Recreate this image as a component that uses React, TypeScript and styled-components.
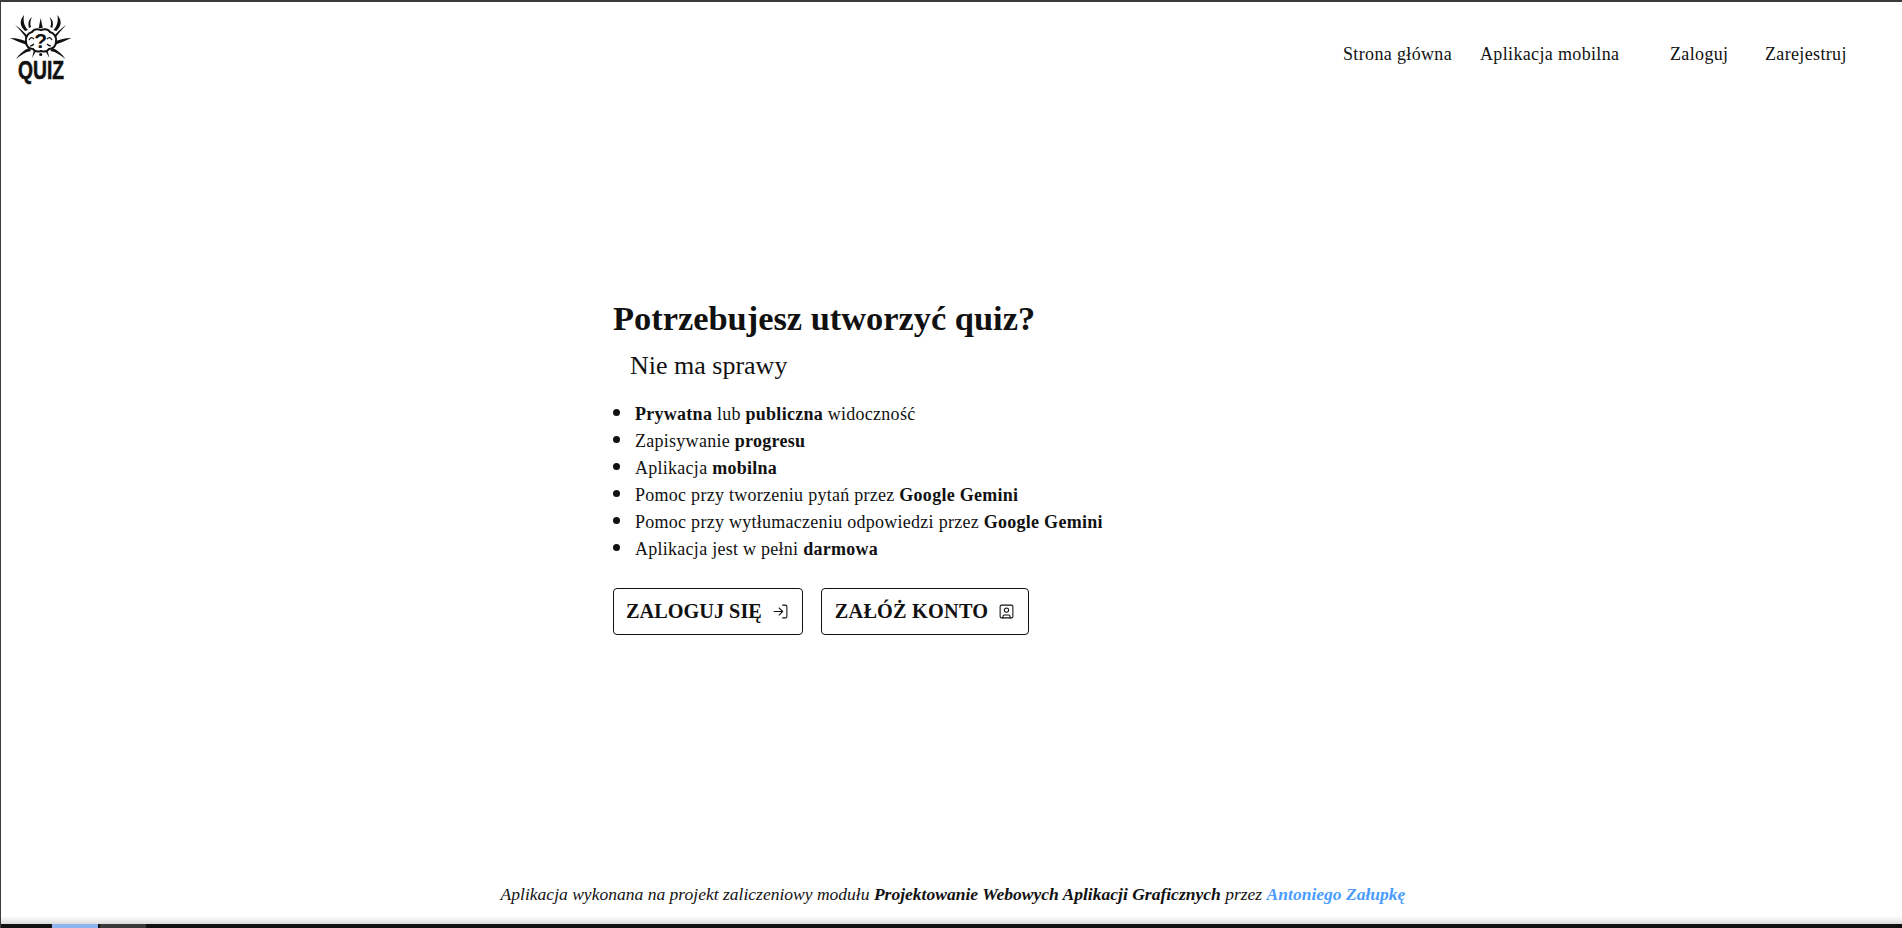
import React from 'react';
import styled, { createGlobalStyle } from 'styled-components';
import { LogIn, SquareUser } from 'lucide-react';

const GlobalStyle = createGlobalStyle`
  html, body {
    margin: 0;
    padding: 0;
    height: 100%;
    background: #fff;
  }
  body {
    font-family: "Liberation Serif", "DejaVu Serif", serif;
    color: #111;
    overflow: hidden;
  }
`;

// one half of the thorns, the other side is the same group mirrored
function Thorns() {
  return (
    <g fill="#111">
      <path d="M14 0c-5 6-4 11 1 16l3-1c-4-4-5-9-4-15z" />
      <path d="M22 2c-4 3-4 7-3 11l2-1c-1-3-1-6 1-10z" />
      <path d="M5 10c5 3 10 8 14 13l-2 2C14 19 10 15 5 10z" />
      <path d="M0 23c7 0 13 2 18 4l-1 3C12 28 6 26 0 23z" />
      <path d="M6 44c3-5 8-9 13-11l2 3c-6 1-10 4-15 8z" />
      <path d="M24 35l2 1-4 7z" />
    </g>
  );
}

function LogoMark() {
  return (
    <LogoSvg viewBox="0 0 62 46" aria-hidden="true">
      <Thorns />
      <g transform="matrix(-1 0 0 1 61.4 0)">
        <Thorns />
      </g>
      <path d="M30.7 3l-2 10h4z" fill="#111" />
      <path
        d="M16 27c-1-5 2-9 6-10 2-3 6-3 9-2 3-1 7-1 9 2 4 1 7 5 6 10 0 4-3 7-7 7-2 3-5 3-8 2-3 1-6 1-8-2-4 0-7-3-7-7z"
        fill="#fff"
        stroke="#111"
        strokeWidth="2"
      />
      <path d="M19 25c2-3 3-3 5-1M42 25c-2-3-3-3-5-1M20 31c2 0 3-1 4-2M41 31c-2 0-3-1-4-2" stroke="#111" strokeWidth="1.2" fill="none" />
      <LogoQuestion x="30.7" y="33" textAnchor="middle">?</LogoQuestion>
      <circle cx="30.7" cy="39.5" r="1.6" fill="#111" />
    </LogoSvg>
  );
}

export default function App() {
  return (
    <>
      <GlobalStyle />
      <Screen>
        <Header>
          <Logo>
            <LogoMark />
            <LogoWord>QUIZ</LogoWord>
          </Logo>
          <Nav>
            <NavLink $width={110}>Strona główna</NavLink>
            <NavLink $width={141}>Aplikacja mobilna</NavLink>
            <NavLink $width={57} $gap={49}>Zaloguj</NavLink>
            <NavLink $width={82} $gap={38}>Zarejestruj</NavLink>
          </Nav>
        </Header>

        <Main>
          <Title>Potrzebujesz utworzyć quiz?</Title>
          <Subtitle>Nie ma sprawy</Subtitle>
          <Features>
            <li><b>Prywatna</b> lub <b>publiczna</b> widoczność</li>
            <li>Zapisywanie <b>progresu</b></li>
            <li>Aplikacja <b>mobilna</b></li>
            <li>Pomoc przy tworzeniu pytań przez <b>Google Gemini</b></li>
            <li>Pomoc przy wytłumaczeniu odpowiedzi przez <b>Google Gemini</b></li>
            <li>Aplikacja jest w pełni <b>darmowa</b></li>
          </Features>
          <Actions>
            <ActionButton>
              ZALOGUJ SIĘ
              <LogIn size={17} strokeWidth={1.5} />
            </ActionButton>
            <ActionButton $wide>
              ZAŁÓŻ KONTO
              <SquareUser size={17} strokeWidth={1.5} />
            </ActionButton>
          </Actions>
        </Main>

        <Footer>
          Aplikacja wykonana na projekt zaliczeniowy modułu{' '}
          <b>Projektowanie Webowych Aplikacji Graficznych</b> przez{' '}
          <AuthorLink>Antoniego Załupkę</AuthorLink>
        </Footer>

        <Shadow />
        <Taskbar>
          <TaskTab $active />
          <TaskTab />
        </Taskbar>
      </Screen>
    </>
  );
}

const Screen = styled.div`
  box-sizing: border-box;
  height: 100vh;
  display: flex;
  flex-direction: column;
  border-top: 2px solid #3c3c3c;
  border-left: 1px solid #3c3c3c;
`;

const Header = styled.header`
  height: 70px;
  display: flex;
  justify-content: space-between;
  align-items: flex-start;
  padding: 13px 55px 0 9px;
`;

const Logo = styled.div`
  width: 62px;
  display: flex;
  flex-direction: column;
  align-items: center;
`;

const LogoSvg = styled.svg`
  width: 62px;
  height: 46px;
  display: block;
`;

const LogoQuestion = styled.text`
  font-family: "Liberation Sans", sans-serif;
  font-weight: 700;
  font-size: 21px;
  fill: #111;
`;

const LogoWord = styled.div`
  margin-top: -2px;
  font-family: "Liberation Sans", sans-serif;
  font-weight: 700;
  font-size: 26px;
  line-height: 22px;
  color: #111;
  -webkit-text-stroke: 0.6px #111;
  transform: scaleX(0.74);
`;

const Nav = styled.nav`
  display: flex;
  margin-top: 29px;
`;

const NavLink = styled.a<{ $width: number; $gap?: number }>`
  width: ${(p) => p.$width}px;
  margin-left: ${(p) => p.$gap ?? 27}px;
  font-size: 18px;
  letter-spacing: 0.35px;
  line-height: 20px;
  color: #111;
  white-space: nowrap;
`;

const Main = styled.main`
  flex: 1;
  display: flex;
  flex-direction: column;
  align-items: flex-start;
  padding: 211px 0 0 612px;
`;

const Title = styled.h1`
  margin: 0;
  font-size: 34.4px;
  line-height: 44px;
  font-weight: 700;
`;

const Subtitle = styled.h2`
  margin: 8px 0 0 17px;
  font-size: 26px;
  line-height: 36px;
  font-weight: 400;
`;

const Features = styled.ul`
  margin: 17px 0 0;
  padding: 0 0 0 22px;
  list-style: none;
  font-size: 18px;
  letter-spacing: 0.27px;

  li {
    position: relative;
    height: 27px;
    line-height: 27px;
  }

  li::before {
    content: "";
    position: absolute;
    left: -22px;
    top: 8px;
    width: 7px;
    height: 7px;
    border-radius: 50%;
    background: #111;
  }
`;

const Actions = styled.div`
  display: flex;
  gap: 18px;
  margin-top: 25px;
`;

const ActionButton = styled.button<{ $wide?: boolean }>`
  box-sizing: border-box;
  height: 47px;
  padding: 0 13px 0 ${(p) => (p.$wide ? 13 : 12)}px;
  display: flex;
  align-items: center;
  gap: 10px;
  background: #fff;
  border: 1px solid #111;
  border-radius: 4px;
  font-family: inherit;
  font-size: 20.3px;
  letter-spacing: ${(p) => (p.$wide ? 0.2 : 0)}px;
  font-weight: 700;
  color: #111;
`;

const Footer = styled.footer`
  padding: 0 0 10px 3px;
  text-align: center;
  font-size: 17.55px;
  line-height: 24px;
  font-style: italic;
`;

const AuthorLink = styled.a`
  color: #4a9dff;
  font-weight: 700;
`;

const Shadow = styled.div`
  height: 8px;
  background: linear-gradient(#fff, #dcdcdc);
`;

const Taskbar = styled.div`
  height: 4px;
  display: flex;
  gap: 2px;
  padding-left: 51px;
  background: #111;
`;

const TaskTab = styled.div<{ $active?: boolean }>`
  width: 46px;
  background: ${(p) => (p.$active ? '#8db4ee' : '#3a3a3a')};
`;
